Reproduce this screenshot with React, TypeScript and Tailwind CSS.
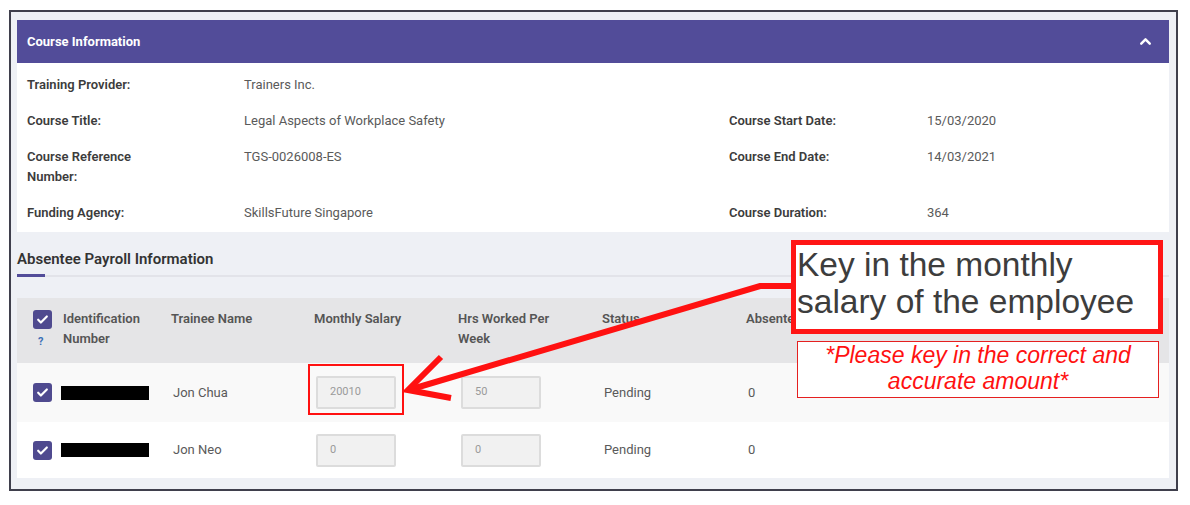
import { ChevronUp } from "lucide-react";

const Check: React.FC = () => {
    return (
        <div className="w-[19px] h-[19px] rounded-[3px] bg-[#4f4a8f] flex items-center justify-center">
            <svg width="13" height="13" viewBox="0 0 24 24" fill="none" stroke="white" strokeWidth="4" strokeLinecap="round" strokeLinejoin="round">
                <path d="M4 12.5l5 5L20 6.5" />
            </svg>
        </div>
    );
};

const Field: React.FC<{ value: string }> = ({ value }) => {
    return (
        <div className="w-[80px] h-[33px] border-2 border-[#dcdcdc] bg-[#f1f1f1] rounded-[2px] flex items-center pl-[12px] text-[11px] text-[#9a9a9a]">
            {value}
        </div>
    );
};

const info = [
    { label: "Training Provider:", value: "Trainers Inc.", rLabel: "", rValue: "" },
    { label: "Course Title:", value: "Legal Aspects of Workplace Safety", rLabel: "Course Start Date:", rValue: "15/03/2020" },
    { label: "Course Reference Number:", value: "TGS-0026008-ES", rLabel: "Course End Date:", rValue: "14/03/2021" },
    { label: "Funding Agency:", value: "SkillsFuture Singapore", rLabel: "Course Duration:", rValue: "364" },
];

const trainees = [
    { name: "Jon Chua", salary: "20010", hrs: "50", bg: "bg-[#f9f9f9]", h: "h-[59px]", mark: true },
    { name: "Jon Neo", salary: "0", hrs: "0", bg: "bg-white", h: "h-[56px]", mark: false },
];

const App: React.FC = () => {
    return (
        <div className="relative w-[1190px] h-[505px] bg-white pt-[10px] pl-[9px] font-['Roboto',sans-serif]">
            <div className="w-[1169px] border-2 border-[#3f3f4c] bg-[#eef0f5] pt-[8px] pl-[6px] pr-[7px] pb-[11px]">
                {/* course information */}
                <div className="h-[43px] bg-[#524c99] flex items-center justify-between pl-[10px] pr-[15px]">
                    <span className="text-white text-[13px] font-bold">Course Information</span>
                    <ChevronUp size={17} strokeWidth={3.5} className="text-white" />
                </div>
                <div className="bg-white pt-[12px] pb-[9px] pl-[10px] grid grid-cols-[217px_485px_198px_1fr] gap-y-[16px] text-[13px] leading-[20px]">
                    {info.map((r) => (
                        <div key={r.label} className="contents">
                            <div className="font-semibold text-[#3c3c3c] max-w-[118px]">{r.label}</div>
                            <div className="text-[#5a5a5a]">{r.value}</div>
                            <div className="font-semibold text-[#3c3c3c]">{r.rLabel}</div>
                            <div className="text-[#5a5a5a]">{r.rValue}</div>
                        </div>
                    ))}
                </div>

                {/* absentee payroll */}
                <div className="pt-[18px] text-[15px] leading-[18px] font-semibold text-[#333]">Absentee Payroll Information</div>
                <div className="mt-[6px] flex items-center">
                    <div className="w-[28px] h-[3px] bg-[#524c99]" />
                    <div className="flex-1 h-[2px] bg-[#e2e3e9]" />
                </div>

                <div className="mt-[21px]">
                    <div className="h-[65px] bg-[#e5e5e7] grid grid-cols-[46px_108px_143px_144px_144px_144px_1fr] pt-[11px] text-[13px] leading-[20px] font-semibold text-[#555]">
                        <div className="pl-[16px] pt-[1px] flex flex-col items-start">
                            <Check />
                            <span className="mt-[6px] ml-[5px] text-[11px] leading-[14px] font-bold text-[#3b6fb6]">?</span>
                        </div>
                        <div className="max-w-[92px]">Identification Number</div>
                        <div>Trainee Name</div>
                        <div>Monthly Salary</div>
                        <div className="max-w-[106px]">Hrs Worked Per Week</div>
                        <div>Status</div>
                        <div>Absentee</div>
                    </div>
                    {trainees.map((t) => (
                        <div key={t.name} className={`${t.h} ${t.bg} grid grid-cols-[46px_108px_143px_144px_144px_144px_1fr] items-center text-[13px] text-[#5a5a5a]`}>
                            <div className="pl-[16px]">
                                <Check />
                            </div>
                            <div className="-ml-[2px]">
                                <div className="w-[88px] h-[14px] bg-black" />
                            </div>
                            <div className="pl-[2px]">{t.name}</div>
                            <div className="pl-[2px] relative">
                                <Field value={t.salary} />
                                {t.mark && (
                                    <div className="absolute left-[-6px] top-[-12px] w-[96px] h-[51px] border-2 border-[#ff1111]" />
                                )}
                            </div>
                            <div className="pl-[3px]">
                                <Field value={t.hrs} />
                            </div>
                            <div className="pl-[2px]">Pending</div>
                            <div className="pl-[2px]">0</div>
                        </div>
                    ))}
                </div>
            </div>

            {/* annotation */}
            <svg className="absolute left-0 top-0 pointer-events-none" width="1190" height="505" viewBox="0 0 1190 505">
                <polyline points="792,286 760,286 412,389" fill="none" stroke="#ff1111" strokeWidth="6" />
                <polyline points="441,357 408,390 451,398" fill="none" stroke="#ff1111" strokeWidth="6" strokeLinejoin="miter" />
            </svg>
            <div className="absolute left-[791px] top-[240px] w-[372px] h-[94px] border-[5px] border-[#ff1515] bg-white pl-[1px] pt-[1px] text-[33.5px] leading-[37px] text-[#3d3d3d] font-['Liberation_Sans',Arial,sans-serif] whitespace-nowrap">
                Key in the monthly
                <br />
                salary of the employee
            </div>
            <div className="absolute left-[797px] top-[341px] w-[362px] h-[57px] border border-[#e52020] bg-white text-center italic text-[23px] leading-[26px] text-[#ff1111] font-['Liberation_Sans',Arial,sans-serif] whitespace-nowrap">
                *Please key in the correct and
                <br />
                accurate amount*
            </div>
        </div>
    );
};

export default App;
